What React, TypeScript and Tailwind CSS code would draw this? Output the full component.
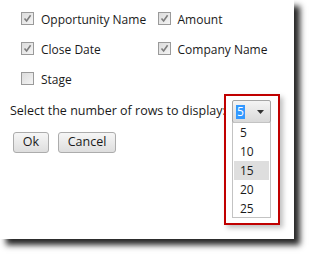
import React from "react";

function Check({ checked }: { checked: boolean }) {
  return (
    <div className="w-[13px] h-[13px] border border-[#9a9a9a] bg-gradient-to-br from-[#dcdcdc] to-[#f4f4f4] flex items-center justify-center shrink-0">
      {checked && (
        <svg width="9" height="9" viewBox="0 0 9 9">
          <path d="M1.5 4.5 L3.6 7 L7.6 1.2" fill="none" stroke="#7d7d7d" strokeWidth="1.6" />
        </svg>
      )}
    </div>
  );
}

function Item({ checked, label }: { checked: boolean; label: string }) {
  return (
    <div className="flex items-center gap-[7px] w-[137px]">
      <Check checked={checked} />
      <span className="mt-[4px]">{label}</span>
    </div>
  );
}

export default function App() {
  const font = { fontFamily: '"Open Sans", "Noto Sans", sans-serif' };
  return (
    <div className="w-[310px] h-[256px] bg-white" style={font}>
      <div className="w-[294px] h-[239px] bg-white shadow-[6px_6px_6px_rgba(0,0,0,0.85)] text-[12px] text-[#1a1a1a] flex flex-col">
        <div className="pl-[21px] pt-[3px] flex flex-col">
          <div className="flex items-center h-[30px]">
            <Item checked label="Opportunity Name" />
            <Item checked label="Amount" />
          </div>
          <div className="flex items-center h-[30px]">
            <Item checked label="Close Date" />
            <Item checked label="Company Name" />
          </div>
          <div className="flex items-center h-[30px]">
            <Item checked={false} label="Stage" />
          </div>
        </div>
        <div className="flex items-center mt-[7px] pl-[10px] h-[23px]">
          <span className="w-[222px] text-[12.5px] whitespace-nowrap">Select the number of rows to display:</span>
          <div className="relative w-[39px] h-[23px]">
            <div className="w-[39px] h-[23px] border border-[#a5a5a5] rounded-[2px] bg-gradient-to-b from-[#f4f4f4] to-[#d9d9d9] flex items-center pl-[3px] pr-[6px]">
              <span className="bg-[#3399ff] text-white px-[1px] leading-[14px]">5</span>
              <div className="flex-1" />
              <svg width="7" height="4" viewBox="0 0 7 4">
                <path d="M0 0 H7 L3.5 4 Z" fill="#333" />
              </svg>
            </div>
            <div className="absolute left-0 top-[22px] w-[39px] h-[96px] bg-white border border-[#c3c3c3] flex flex-col">
              {["5", "10", "15", "20", "25"].map((v) => (
                <div
                  key={v}
                  className={
                    "h-[19px] leading-[19px] pl-[6px] mx-[1px] " + (v === "15" ? "bg-[#dedede]" : "")
                  }
                >
                  {v}
                </div>
              ))}
            </div>
            <div className="absolute left-[-8px] top-[-6px] w-[56px] h-[131px] border-2 border-[#c00000] shadow-[3px_3px_5px_rgba(0,0,0,0.25)]" />
          </div>
        </div>
        <div className="flex gap-[9px] pl-[13px] mt-[9px]">
          <button className="w-[36px] h-[21px] border border-[#acacac] rounded-[3px] bg-gradient-to-b from-[#f6f6f6] to-[#dedede] text-[12.5px] leading-none">
            Ok
          </button>
          <button className="w-[58px] h-[21px] border border-[#acacac] rounded-[3px] bg-gradient-to-b from-[#f6f6f6] to-[#dedede] text-[12.5px] leading-none">
            Cancel
          </button>
        </div>
      </div>
    </div>
  );
}
